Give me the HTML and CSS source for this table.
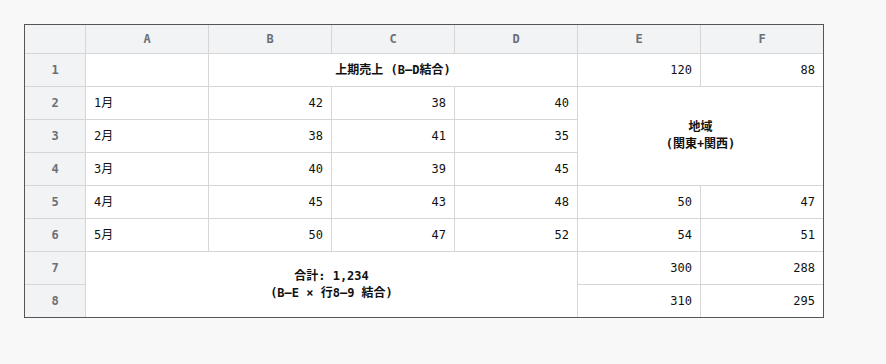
FILE: index.html
```html
<!DOCTYPE html>
<html lang="ja">
<head>
<meta charset="utf-8">
<title>Sheet</title>
<link rel="stylesheet" href="styles.css">
</head>
<body>
<div class="sheet">
  <div class="hd corner"></div>
  <div class="hd">A</div>
  <div class="hd">B</div>
  <div class="hd">C</div>
  <div class="hd">D</div>
  <div class="hd">E</div>
  <div class="hd">F</div>

  <div class="rh">1</div>
  <div class="cell"></div>
  <div class="cell merged m-b1">上期売上 (B–D結合)</div>
  <div class="cell num">120</div>
  <div class="cell num">88</div>

  <div class="rh">2</div>
  <div class="cell">1月</div>
  <div class="cell num">42</div>
  <div class="cell num">38</div>
  <div class="cell num">40</div>
  <div class="cell merged m-e2">地域<br>(関東+関西)</div>

  <div class="rh">3</div>
  <div class="cell">2月</div>
  <div class="cell num">38</div>
  <div class="cell num">41</div>
  <div class="cell num">35</div>

  <div class="rh">4</div>
  <div class="cell">3月</div>
  <div class="cell num">40</div>
  <div class="cell num">39</div>
  <div class="cell num">45</div>

  <div class="rh">5</div>
  <div class="cell">4月</div>
  <div class="cell num">45</div>
  <div class="cell num">43</div>
  <div class="cell num">48</div>
  <div class="cell num">50</div>
  <div class="cell num">47</div>

  <div class="rh">6</div>
  <div class="cell">5月</div>
  <div class="cell num">50</div>
  <div class="cell num">47</div>
  <div class="cell num">52</div>
  <div class="cell num">54</div>
  <div class="cell num">51</div>

  <div class="rh">7</div>
  <div class="cell merged m-a7">合計: 1,234<br>(B–E × 行8–9 結合)</div>
  <div class="cell num">300</div>
  <div class="cell num">288</div>

  <div class="rh">8</div>
  <div class="cell num">310</div>
  <div class="cell num">295</div>
</div>
</body>
</html>
```

FILE: styles.css
```css
html, body {
  margin: 0;
  padding: 0;
  background: #f8f8f8;
}

body {
  padding: 24px;
  font-family: "DejaVu Sans Mono", "Noto Sans CJK JP", monospace;
  font-size: 12px;
  color: #111;
}

.sheet {
  display: grid;
  grid-template-columns: 60px repeat(6, 122px);
  grid-template-rows: 28px repeat(8, 32px);
  gap: 1px;
  width: max-content;
  background: #d6d6d6;
  border: 1px solid #555;
}

.hd,
.rh {
  background: #f2f3f5;
  color: #6b7078;
  font-weight: bold;
  display: flex;
  align-items: center;
  justify-content: center;
}

.cell {
  background: #fff;
  display: flex;
  align-items: center;
  padding: 0 8px;
  line-height: 17px;
}

.num {
  justify-content: flex-end;
}

.merged {
  justify-content: center;
  text-align: center;
  font-weight: bold;
}

.m-b1 {
  grid-column: 3 / span 3;
}

.m-e2 {
  grid-column: 6 / span 2;
  grid-row: 3 / span 3;
}

.m-a7 {
  grid-column: 2 / span 4;
  grid-row: 8 / span 2;
}
```
